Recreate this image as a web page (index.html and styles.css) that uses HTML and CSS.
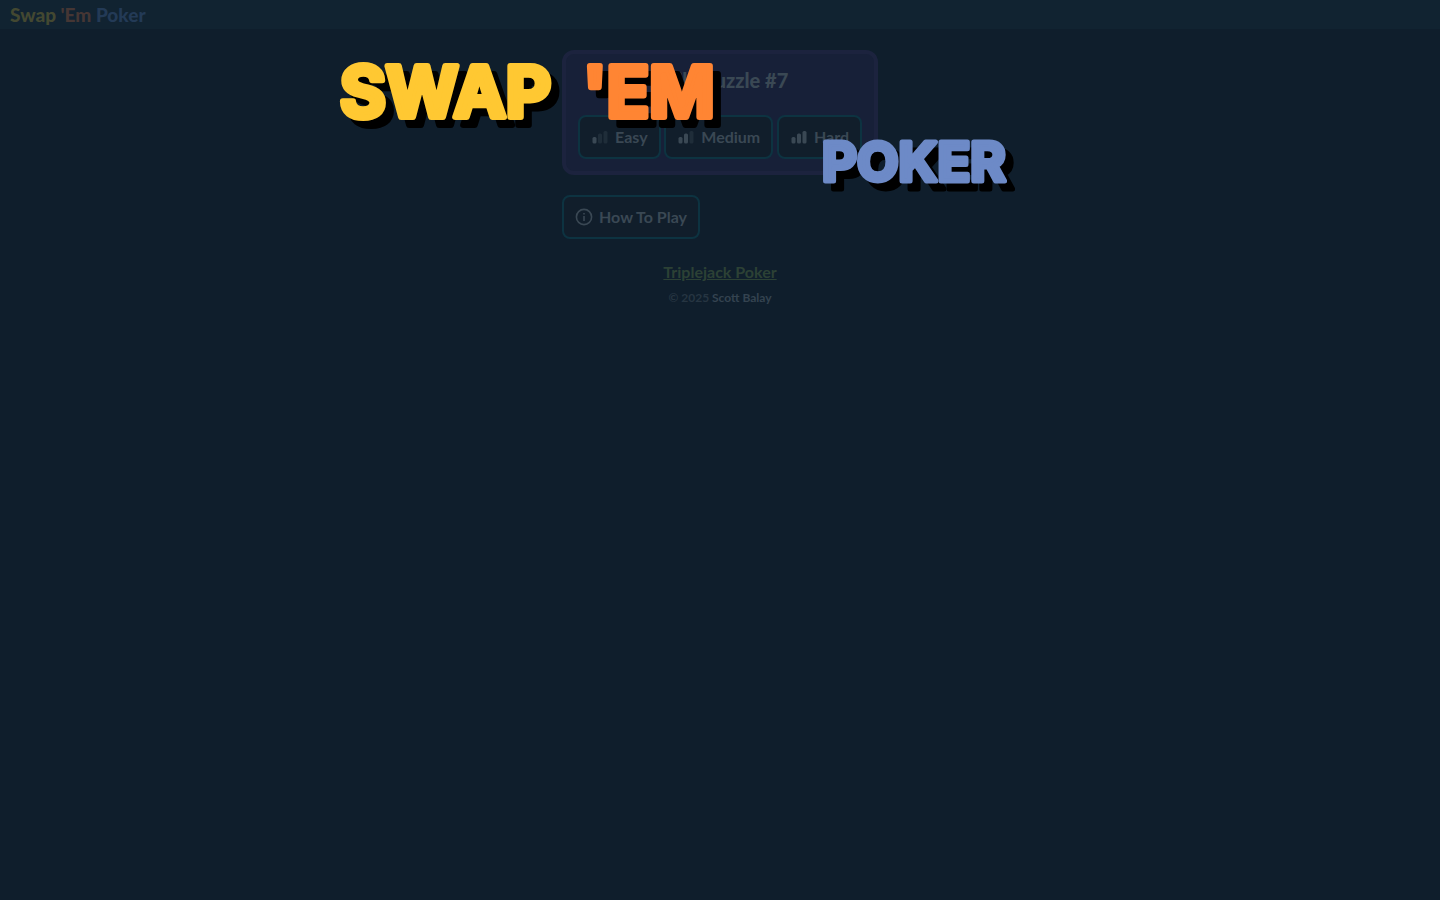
FILE: index.html
```html
<!DOCTYPE html>
<html lang="en">

<head>
  <meta charset="UTF-8">
  <meta name="viewport" content="width=device-width, initial-scale=1.0">
  <title>Swap 'Em Poker</title>
  <link rel="stylesheet" href="styles.css">
</head>

<body>
  <header class="top-bar">
    <span class="yellow">Swap</span> <span class="orange">'Em</span> <span class="blue">Poker</span>
  </header>

  <main class="menu">
    <section class="daily">
      <h1>Daily Puzzle #7</h1>
      <div class="levels">
        <button class="btn" type="button">
          <svg class="bars" viewBox="0 0 18 18" aria-hidden="true">
            <rect x="1.5" y="9" width="4" height="6.5" rx="1.5" />
            <rect class="off" x="7" y="5.5" width="4" height="10" rx="1.5" />
            <rect class="off" x="12.5" y="3" width="4" height="12.5" rx="1.5" />
          </svg>
          Easy
        </button>
        <button class="btn" type="button">
          <svg class="bars" viewBox="0 0 18 18" aria-hidden="true">
            <rect x="1.5" y="9" width="4" height="6.5" rx="1.5" />
            <rect x="7" y="5.5" width="4" height="10" rx="1.5" />
            <rect class="off" x="12.5" y="3" width="4" height="12.5" rx="1.5" />
          </svg>
          Medium
        </button>
        <button class="btn" type="button">
          <svg class="bars" viewBox="0 0 18 18" aria-hidden="true">
            <rect x="1.5" y="9" width="4" height="6.5" rx="1.5" />
            <rect x="7" y="5.5" width="4" height="10" rx="1.5" />
            <rect x="12.5" y="3" width="4" height="12.5" rx="1.5" />
          </svg>
          Hard
        </button>
      </div>
    </section>

    <button class="btn help" type="button">
      <svg class="info" viewBox="0 0 18 18" aria-hidden="true">
        <circle cx="9" cy="9" r="7.6" />
        <path d="M9 8V13M9 5v1.6" />
      </svg>
      How To Play
    </button>

    <footer class="credits">
      <a href="#">Triplejack Poker</a>
      <p>© 2025 <span>Scott Balay</span></p>
    </footer>
  </main>

  <!-- intro title, sits over the menu -->
  <div class="splash">
    <svg class="logo" viewBox="0 0 720 160" role="img" aria-label="Swap 'Em Poker">
      <text class="big yellow" x="-20" y="77">SWAP</text>
      <text class="big orange" x="223" y="77">'EM</text>
      <text class="small blue" x="462" y="141">POKER</text>
    </svg>
  </div>
</body>

</html>
```

FILE: styles.css
```css
* {
  box-sizing: border-box;
}

body {
  margin: 0;
  min-height: 100vh;
  background: #0f1e2c;
  color: #3a4854;
  font-family: Lato, "Open Sans", sans-serif;
  font-size: 16px;
}

.top-bar {
  height: 29px;
  padding: 0 10px;
  background: #112331;
  font-size: 19px;
  font-weight: 900;
  line-height: 29px;
}

.top-bar .yellow {
  color: #434831;
}

.top-bar .orange {
  color: #453634;
}

.top-bar .blue {
  color: #233a56;
}

.menu {
  width: 316px;
  max-width: 100%;
  margin: 21px auto 0;
}

.daily {
  height: 125px;
  padding: 12px;
  border: 4px solid #1c233e;
  border-radius: 12px;
  background: #172038;
}

.daily h1 {
  margin: 0 0 21px;
  font-size: 20px;
  font-weight: 900;
  line-height: 28px;
  text-align: center;
}

.levels {
  display: flex;
  justify-content: space-between;
}

.btn {
  display: flex;
  align-items: center;
  gap: 6px;
  height: 44px;
  padding: 0 11px 2px;
  border: 2px solid #0d3341;
  border-radius: 8px;
  background: #111e2b;
  color: #3a4854;
  font-family: inherit;
  font-size: 16px;
  font-weight: 700;
}

.btn svg {
  width: 18px;
  height: 18px;
  margin-top: 2px;
}

.bars {
  fill: #3a4854;
}

.bars .off {
  fill: #1f2d39;
}

.help {
  margin-top: 20px;
}

.info {
  fill: none;
  stroke: #3a4854;
  stroke-width: 1.6;
}

.credits {
  margin-top: 22px;
  text-align: center;
  line-height: 22px;
}

.credits a {
  color: #2c4135;
  font-weight: 700;
}

.credits p {
  margin: 4px 0 0;
  color: #263542;
  font-size: 12px;
  font-weight: 700;
}

.credits span {
  color: #344350;
}

.splash {
  position: absolute;
  top: 40px;
  left: 0;
  right: 0;
  display: flex;
  justify-content: center;
  pointer-events: none;
}

.logo {
  width: 720px;
  height: 160px;
  overflow: visible;
  filter: drop-shadow(8px 8px 0 #000);
}

.logo text {
  font-family: Inter, sans-serif;
  font-weight: 700;
  stroke-linejoin: round;
}

.logo .big {
  font-size: 70px;
  stroke-width: 6px;
}

.logo .small {
  font-size: 54px;
  stroke-width: 5px;
}

.logo .yellow {
  fill: #ffc832;
  stroke: #ffc832;
}

.logo .orange {
  fill: #ff8533;
  stroke: #ff8533;
}

.logo .blue {
  fill: #6d8ac7;
  stroke: #6d8ac7;
}
```
